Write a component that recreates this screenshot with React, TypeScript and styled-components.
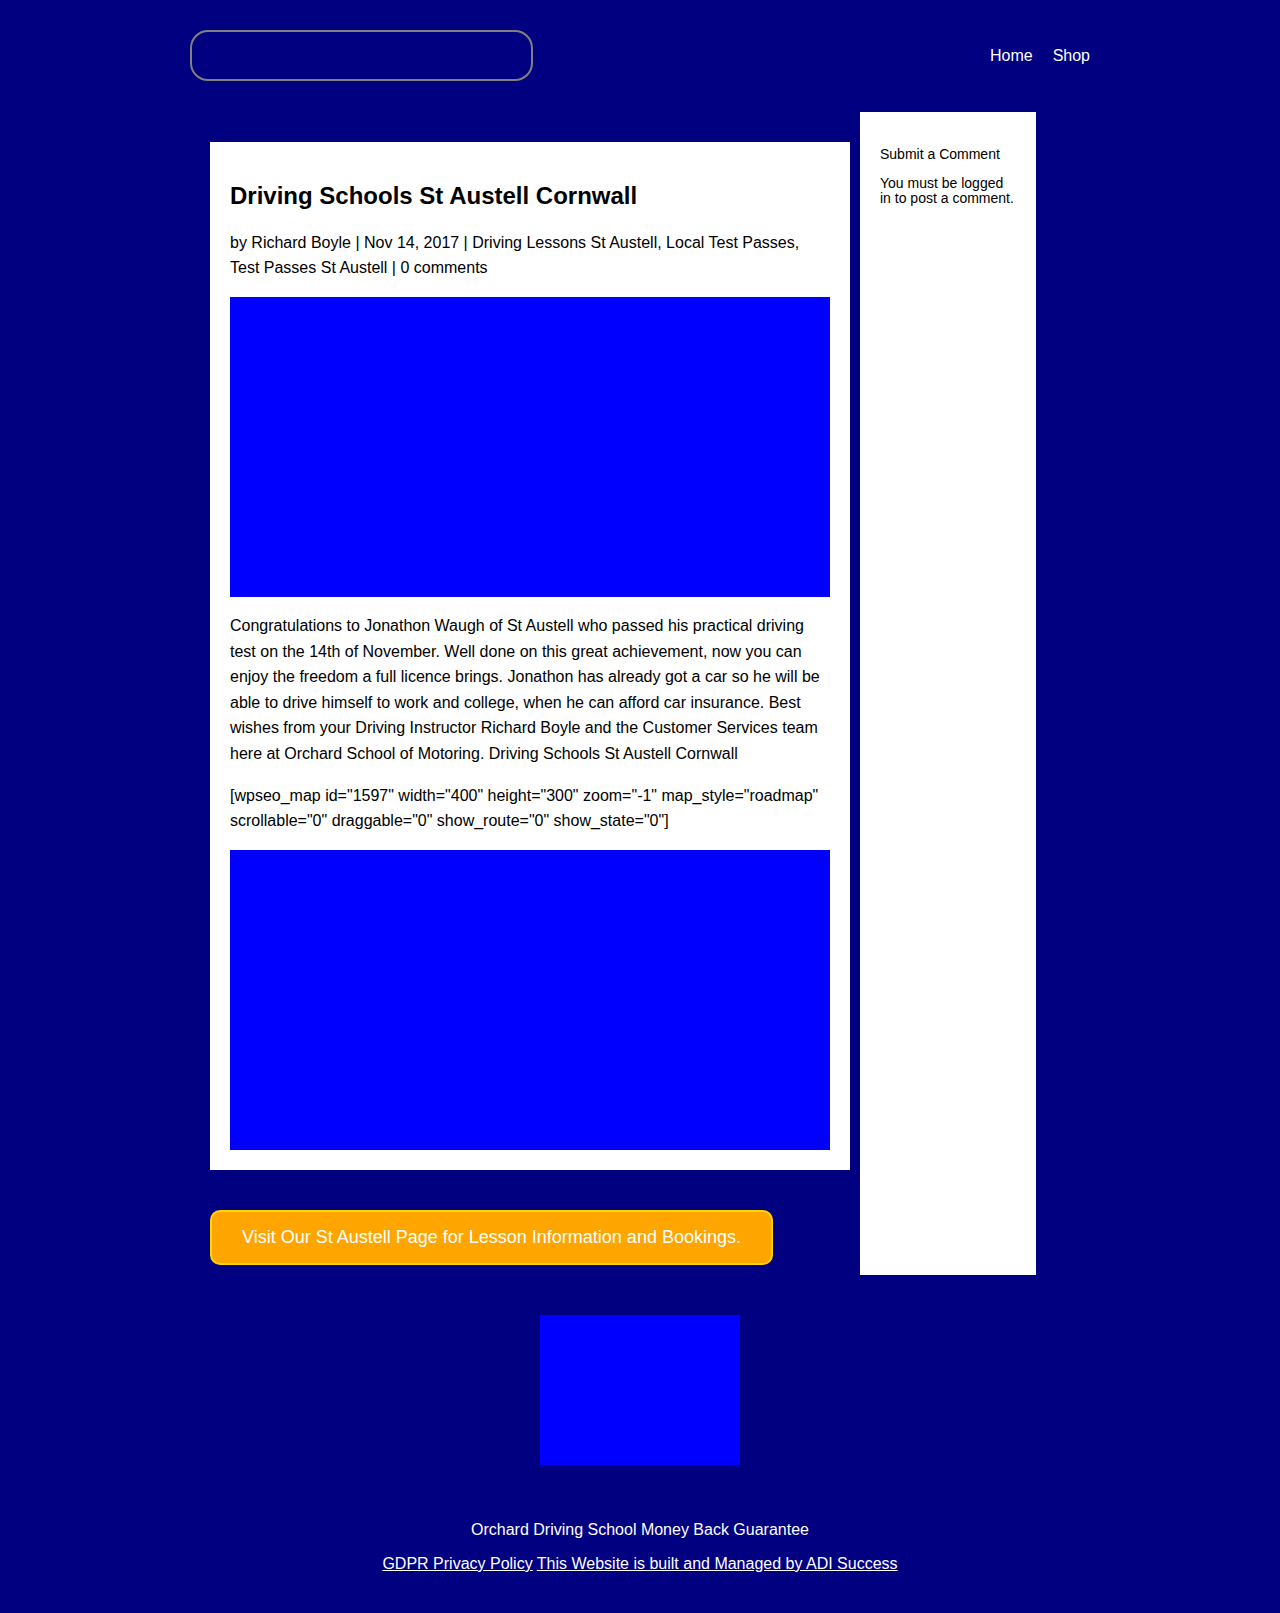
import React from "react";
import styled, { createGlobalStyle } from "styled-components";

const GlobalStyle = createGlobalStyle`
  html, body {
    margin: 0;
    padding: 0;
    background: #000080;
  }
  body {
    font-family: "Liberation Sans", Arial, Helvetica, sans-serif;
    color: #000;
  }
  * { box-sizing: border-box; }
`;

const Page = styled.div`
  min-height: 1613px;
  background: #000080;
`;

const Header = styled.header`
  width: 900px;
  margin: 0 auto;
  padding: 30px 0 31px;
  display: flex;
  align-items: center;
  justify-content: space-between;
`;

const SearchBox = styled.div`
  width: 343px;
  height: 51px;
  border: 2px solid #808080;
  border-radius: 18px;
`;

const Nav = styled.nav`
  display: flex;
  gap: 20px;
`;

const NavLink = styled.a`
  color: #fff;
  font-size: 16px;
  line-height: 18px;
  text-decoration: none;
`;

const Row = styled.div`
  width: 900px;
  margin: 0 auto;
  padding-left: 20px;
  display: grid;
  grid-template-columns: 640px 176px;
  column-gap: 10px;
  align-items: stretch;
`;

const MainColumn = styled.main`
  padding: 30px 0 10px;
  display: flex;
  flex-direction: column;
  align-items: flex-start;
  gap: 40px;
`;

const Card = styled.article`
  width: 640px;
  background: #fff;
  padding: 20px;
`;

const Title = styled.h1`
  margin: 20px 0 19px;
  font-size: 24px;
  line-height: 28.8px;
  font-weight: 700;
`;

const Text = styled.p`
  margin: 0 0 16px;
  font-size: 16px;
  line-height: 25.6px;
`;

const Picture = styled.div<{ $last?: boolean }>`
  width: 600px;
  height: 300px;
  background: #0000ff;
  margin-bottom: ${(p) => (p.$last ? "0" : "16px")};
`;

const CtaButton = styled.a`
  display: inline-block;
  background: #ffa500;
  border: 2px solid #ffd700;
  border-radius: 10px;
  color: #fff;
  font-size: 18px;
  line-height: 31px;
  padding: 10px 30px;
  text-decoration: none;
`;

const Sidebar = styled.aside`
  background: #fff;
  padding: 34px 20px 20px;
`;

const SideHeading = styled.h3`
  margin: 0 0 14px;
  font-size: 14px;
  line-height: 16px;
  font-weight: 400;
`;

const SideText = styled.p`
  margin: 0;
  font-size: 14px;
  line-height: 15px;
`;

const Footer = styled.footer`
  padding: 40px 0 38px;
  display: flex;
  flex-direction: column;
  align-items: center;
`;

const FooterImage = styled.div`
  width: 200px;
  height: 150px;
  background: #0000ff;
  margin-bottom: 56px;
`;

const FooterText = styled.p<{ $gap?: number }>`
  margin: 0;
  margin-top: ${(p) => p.$gap ?? 0}px;
  color: #fff;
  font-size: 16px;
  line-height: 18.4px;
  text-align: center;
`;

const FooterLink = styled.a`
  color: #fff;
  text-decoration: underline;
`;

export default function App() {
  return (
    <Page>
      <GlobalStyle />
      <Header>
        <SearchBox />
        <Nav>
          <NavLink href="#">Home</NavLink>
          <NavLink href="#">Shop</NavLink>
        </Nav>
      </Header>
      <Row>
        <MainColumn>
          <Card>
            <Title>Driving Schools St Austell Cornwall</Title>
            <Text>
              by Richard Boyle | Nov 14, 2017 | Driving Lessons St Austell, Local Test Passes, Test
              Passes St Austell | 0 comments
            </Text>
            <Picture />
            <Text>
              Congratulations to Jonathon Waugh of St Austell who passed his practical driving test on
              the 14th of November. Well done on this great achievement, now you can enjoy the freedom a
              full licence brings. Jonathon has already got a car so he will be able to drive himself to
              work and college, when he can afford car insurance. Best wishes from your Driving
              Instructor Richard Boyle and the Customer Services team here at Orchard School of
              Motoring. Driving Schools St Austell Cornwall
            </Text>
            <Text>
              [wpseo_map id="1597" width="400" height="300" zoom="-1" map_style="roadmap"
              scrollable="0" draggable="0" show_route="0" show_state="0"]
            </Text>
            <Picture $last />
          </Card>
          <CtaButton href="#">Visit Our St Austell Page for Lesson Information and Bookings.</CtaButton>
        </MainColumn>
        <Sidebar>
          <SideHeading>Submit a Comment</SideHeading>
          <SideText>You must be logged in to post a comment.</SideText>
        </Sidebar>
      </Row>
      <Footer>
        <FooterImage />
        <FooterText>Orchard Driving School Money Back Guarantee</FooterText>
        <FooterText $gap={15.5}>
          <FooterLink href="#">GDPR Privacy Policy</FooterLink>{" "}
          <FooterLink href="#">This Website is built and Managed by ADI Success</FooterLink>
        </FooterText>
      </Footer>
    </Page>
  );
}
